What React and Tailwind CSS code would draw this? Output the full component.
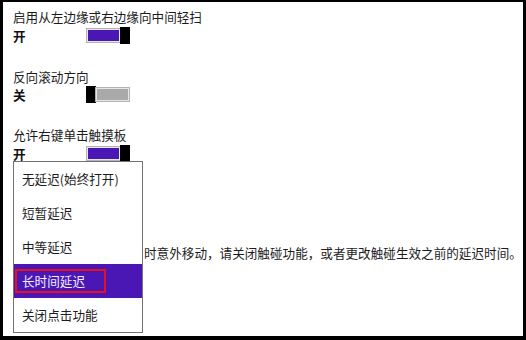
import React from "react";

const font = { fontFamily: '"Noto Sans CJK SC", "Noto Sans", sans-serif' };

function Toggle({ on }) {
  const track = (
    <div className="w-[35px] h-[15px] border border-[#b3b3b3] bg-[#e6e6e6] p-[1px] flex">
      <div className={on ? "flex-1 bg-[#4a17b5]" : "flex-1 bg-[#a9a9a9]"} />
    </div>
  );
  const thumb = <div className="w-[10px] h-[17px] bg-black shrink-0" />;
  return (
    <div className="flex items-center h-[17px] w-[44px]">
      {on ? (
        <>
          {track}
          <div className="-ml-[1px] flex">{thumb}</div>
        </>
      ) : (
        <>
          {thumb}
          <div className="-ml-[1px] flex">{track}</div>
        </>
      )}
    </div>
  );
}

function Setting({ label, state, on, labelMt, rowMt }) {
  return (
    <div className={labelMt}>
      <div className="h-[16px] leading-[16px] text-[12.6px] text-[#1c1c1c]">{label}</div>
      <div className={`flex items-center h-[17px] ${rowMt}`}>
        <div className="w-[73px] text-[12.6px] font-bold leading-[16px] text-[#111]">{state}</div>
        <Toggle on={on} />
      </div>
    </div>
  );
}

export default function App() {
  const items = ["无延迟(始终打开)", "短暂延迟", "中等延迟", "长时间延迟", "关闭点击功能"];
  return (
    <div className="w-[526px] h-[340px] bg-black pt-[2px] pl-[3px] pr-[3px] pb-[4px]" style={font}>
      <div className="relative w-full h-full bg-white pl-[10px] pt-[7px] overflow-hidden">
        <Setting label="启用从左边缘或右边缘向中间轻扫" state="开" on labelMt="" rowMt="mt-[2px]" />
        <Setting label="反向滚动方向" state="关" on={false} labelMt="mt-[25px]" rowMt="mt-[1px]" />
        <Setting label="允许右键单击触摸板" state="开" on labelMt="mt-[24px]" rowMt="mt-[2px]" />

        <div className="mt-[83px] flex whitespace-nowrap text-[12.6px] leading-[16px] text-[#1c1c1c]">
          <span className="w-[131px] shrink-0">为防止光标在您键入</span>
          <span>时意外移动，请关闭触碰功能，或者更改触碰生效之前的延迟时间。</span>
        </div>

        <div className="absolute left-[10px] top-[159px] w-[130px] h-[172px] bg-white border border-[#727272] flex flex-col">
          {items.map((t, i) => {
            const sel = i === 3;
            return (
              <div
                key={t}
                className={
                  sel
                    ? "relative h-[34px] shrink-0 flex items-center pl-[8px] bg-[#4a17b5] text-[#f2eefc] text-[12.6px]"
                    : "h-[34px] shrink-0 flex items-center pl-[8px] text-[#1c1c1c] text-[12.6px]"
                }
              >
                {t}
                {sel && (
                  <div className="absolute left-[1px] top-[5px] w-[91px] h-[24px] border-2 border-[#e8101a]" />
                )}
              </div>
            );
          })}
        </div>
      </div>
    </div>
  );
}
